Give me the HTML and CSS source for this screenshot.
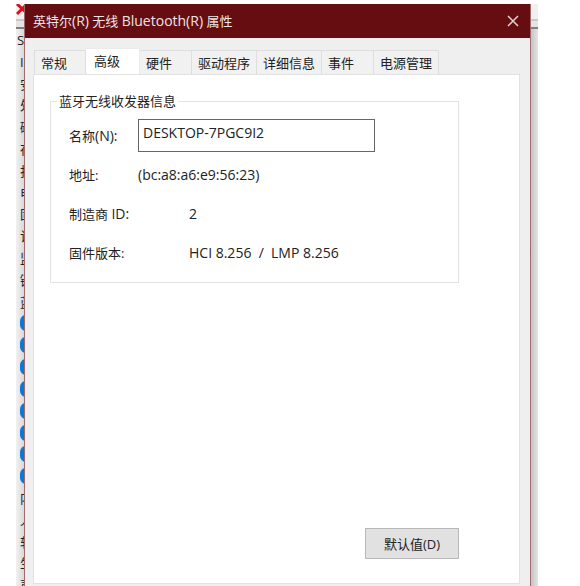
FILE: index.html
```html
<!DOCTYPE html>
<html lang="zh-CN">
<head>
  <meta charset="utf-8">
  <meta name="viewport" content="width=device-width, initial-scale=1.0">
  <title>英特尔(R) 无线 Bluetooth(R) 属性</title>
  <link rel="stylesheet" href="styles.css">
</head>
<body>
  <div class="screen">
    <!-- device manager behind the dialog -->
    <div class="manager">
      <div class="manager-toolbar">
        <svg class="remove-icon" width="14" height="14" viewBox="0 0 14 14">
          <path d="M1 0L14 12M13 -2L1 10" stroke="#d8101c" stroke-width="3"/>
        </svg>
      </div>
      <ul class="device-list">
        <li class="root">S</li>
        <li>I</li>
        <li>安</li>
        <li>处</li>
        <li>磁</li>
        <li>存</li>
        <li>打</li>
        <li>电</li>
        <li>固</li>
        <li>计</li>
        <li>监</li>
        <li>键</li>
        <li>蓝</li>
        <li><span class="bt-icon"></span></li>
        <li><span class="bt-icon"></span></li>
        <li><span class="bt-icon"></span></li>
        <li><span class="bt-icon"></span></li>
        <li><span class="bt-icon"></span></li>
        <li><span class="bt-icon"></span></li>
        <li><span class="bt-icon"></span></li>
        <li><span class="bt-icon"></span></li>
        <li>内</li>
        <li>人</li>
        <li>软</li>
        <li>生</li>
        <li>声</li>
      </ul>
    </div>

    <div class="dialog">
      <div class="title-bar">
        <h1>英特尔<span class="latin">(R)</span> 无线 <span class="latin">Bluetooth(R)</span> 属性</h1>
        <button class="close-btn" aria-label="关闭">
          <svg width="12" height="12" viewBox="0 0 12 12">
            <path d="M1 1L11 11M11 1L1 11" fill="none" stroke="#e6d3d4" stroke-width="1.5"/>
          </svg>
        </button>
      </div>

      <div class="dialog-body">
        <div class="tabs">
          <button class="tab">常规</button>
          <button class="tab active">高级</button>
          <button class="tab">硬件</button>
          <button class="tab wide">驱动程序</button>
          <button class="tab wide">详细信息</button>
          <button class="tab">事件</button>
          <button class="tab wide">电源管理</button>
        </div>

        <div class="panel">
          <fieldset class="group">
            <legend>蓝牙无线收发器信息</legend>
            <div class="row">
              <label class="row-label" for="name">名称<span class="latin">(N):</span></label>
              <input class="name-input latin" id="name" type="text" value="DESKTOP-7PGC9I2">
            </div>
            <div class="row">
              <span class="row-label">地址:</span>
              <span class="latin">(bc:a8:a6:e9:56:23)</span>
            </div>
            <div class="row">
              <span class="row-label long">制造商 <span class="latin">ID:</span></span>
              <span class="latin">2</span>
            </div>
            <div class="row">
              <span class="row-label long">固件版本:</span>
              <span class="version latin">HCI 8.256  /  LMP 8.256</span>
            </div>
          </fieldset>
          <button class="default-btn">默认值(D)</button>
        </div>
      </div>
    </div>

    <div class="manager-edge">
      <div class="manager-toolbar"></div>
    </div>
  </div>
</body>
</html>
```

FILE: styles.css
```css
* {
  box-sizing: border-box;
}

body {
  margin: 0;
  background: #fff;
  color: #222;
  font-family: "Open Sans", "Noto Sans CJK SC", sans-serif;
  font-size: 13px;
  line-height: 20px;
}

button,
input {
  font: inherit;
  color: inherit;
}

.latin {
  font-size: 14px;
}

.screen {
  display: flex;
  height: 100vh;
  padding: 4px 42px 0 16px;
  overflow: hidden;
}

.manager {
  display: flex;
  flex-direction: column;
  width: 8px;
  overflow: hidden;
  background: linear-gradient(to right, #f1f1f1, #d9d9d9);
}

.manager-toolbar {
  flex: none;
  height: 25px;
  border-bottom: 2px solid #808080;
  background: linear-gradient(#f0f0f0 15px, #c8c8c8 15px, #c8c8c8 17px, #e4e4e4 17px);
}

.remove-icon {
  display: block;
}

.device-list {
  display: flex;
  flex: 1;
  flex-direction: column;
  margin: 0 0 -10px;
  padding: 0;
  list-style: none;
}

.device-list li {
  display: flex;
  flex: 1;
  align-items: center;
  min-height: 0;
  padding-left: 4px;
}

.device-list .root {
  padding-left: 1px;
}

.bt-icon {
  flex: none;
  width: 12px;
  height: 16px;
  border-radius: 6px;
  background: #0a78d8;
}

.dialog {
  display: flex;
  flex: 1;
  flex-direction: column;
  border: solid #a06a6d;
  border-width: 0 1px;
  background: #efefef;
}

.title-bar {
  display: flex;
  align-items: center;
  justify-content: space-between;
  height: 34px;
  padding: 0 8px;
  background: #650d11;
  color: #f0e4e4;
}

.title-bar h1 {
  margin: 0;
  font-size: 13px;
  font-weight: normal;
}

.close-btn {
  display: flex;
  padding: 3px;
  border: none;
  background: none;
}

.dialog-body {
  display: flex;
  flex: 1;
  flex-direction: column;
  padding: 10px 10px 2px 8px;
}

.tabs {
  display: flex;
  align-items: flex-end;
  padding-left: 1px;
}

.tab {
  width: 52px;
  height: 24px;
  padding: 0 0 0 6px;
  border: 1px solid #dedede;
  border-width: 1px 1px 0 0;
  background: #f1f1f1;
  text-align: left;
  white-space: nowrap;
}

.tab:first-child {
  border-left-width: 1px;
}

.tab.wide {
  width: 65px;
}

.tab.active {
  width: 54px;
  height: 27px;
  padding: 0 0 3px 8px;
  margin-bottom: -1px;
  border-color: #ececec;
  background: #fff;
}

.panel {
  display: flex;
  flex: 1;
  flex-direction: column;
  justify-content: space-between;
  padding: 16px 60px 24px 16px;
  border: 1px solid #e2e2e2;
  background: #fff;
}

.group {
  min-width: 0;
  margin: 0;
  padding: 5px 18px 10px;
  border: 1px solid #e2e2e2;
}

.group legend {
  margin-left: -12px;
  padding: 0 2px;
}

.row {
  display: flex;
  align-items: center;
  height: 39px;
}

.row-label {
  flex: none;
  width: 69px;
}

.row-label.long {
  width: 120px;
}

.name-input {
  width: 237px;
  height: 33px;
  padding: 0 4px 6px;
  border: 1px solid #666;
  outline: none;
}

.version {
  white-space: pre;
}

.default-btn {
  align-self: flex-end;
  width: 94px;
  height: 31px;
  padding: 0;
  border: 1px solid #b8b8b8;
  background: #e1e1e1;
}

.manager-edge {
  width: 7px;
  background: linear-gradient(to right, #c4c4c4, #e4e4e4);
}
```
